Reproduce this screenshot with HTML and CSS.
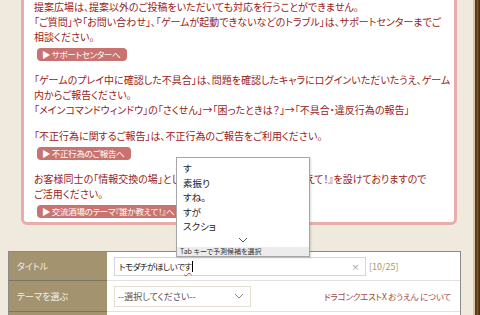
FILE: index.html
```html
<!DOCTYPE html>
<html lang="ja">
<head>
  <meta charset="UTF-8">
  <meta name="viewport" content="width=device-width, initial-scale=1.0">
  <title>提案広場 投稿</title>
  <link rel="stylesheet" href="styles.css">
</head>
<body>
  <div class="page">
    <div class="main">
      <!-- 注意書き -->
      <div class="notice">
        <div class="section">
          <p>提案広場は、提案以外のご投稿をいただいても対応を行うことができません。<br>
          「ご質問」や「お問い合わせ」、「ゲームが起動できないなどのトラブル」は、サポートセンターまでご<br>
          相談ください。</p>
          <a class="pill" href="#">▶ サポートセンターへ</a>
        </div>
        <div class="section">
          <p>「ゲームのプレイ中に確認した不具合」は、問題を確認したキャラにログインいただいたうえ、ゲーム<br>
          内からご報告ください。<br>
          「メインコマンドウィンドウ」の「さくせん」→「困ったときは？」→「不具合・違反行為の報告」</p>
        </div>
        <div class="section">
          <p>「不正行為に関するご報告」は、不正行為のご報告をご利用ください。</p>
          <a class="pill" href="#">▶ 不正行為のご報告へ</a>
        </div>
        <div class="section">
          <p>お客様同士の「情報交換の場」として、交流酒場のテーマ『誰か教えて！』を設けておりますので<br>
          ご活用ください。</p>
          <a class="pill" href="#">▶ 交流酒場のテーマ『誰か教えて！』へ</a>
        </div>
      </div>

      <!-- 投稿フォーム -->
      <div class="form">
        <div class="row">
          <div class="label">タイトル</div>
          <div class="field">
            <div class="input">
              <span class="typed">トモダチがほしいで<span class="squiggle">す</span><span class="caret"></span></span>
              <span class="clear">×</span>
            </div>
            <span class="count">[10/25]</span>
          </div>
        </div>
        <div class="row">
          <div class="label">テーマを選ぶ</div>
          <div class="field">
            <div class="select">
              <span>--選択してください--</span>
              <svg width="10" height="6" viewBox="0 0 10 6"><path d="M1 1l4 4 4-4" fill="none" stroke="#888" stroke-width="1"/></svg>
            </div>
            <a class="about" href="#">ドラゴンクエストX おうえん について</a>
          </div>
        </div>
        <div class="row">
          <div class="label"></div>
          <div class="field"></div>
        </div>
      </div>

      <!-- 予測変換ポップアップ -->
      <div class="ime">
        <ul>
          <li>す</li>
          <li>素振り</li>
          <li>すね。</li>
          <li>すが</li>
          <li>スクショ</li>
        </ul>
        <div class="more">
          <svg width="10" height="6" viewBox="0 0 10 6"><path d="M1 1l4 4 4-4" fill="none" stroke="#555" stroke-width="1"/></svg>
        </div>
        <div class="hint">Tab キーで予測候補を選択</div>
      </div>
    </div>
    <div class="frame"></div>
  </div>
</body>
</html>
```

FILE: styles.css
```css
body {
    margin: 0;
    background-color: #f0e9dd;
    font-family: "Noto Sans CJK JP", "Noto Sans", sans-serif;
    font-size: 10px;
    overflow: hidden;
  }

  .page {
    display: flex;
    height: 315px;
  }

  .main {
    position: relative;
    width: 473px;
    padding-left: 8px;
    box-sizing: border-box;
  }

  .frame {
    width: 5px;
    border-left: 2px solid #d9c9a4;
    background: linear-gradient(to right, #4a2c14, #7b5126 50%, #3b2410);
  }

  .notice {
    margin: -12px 0 0 13px;
    width: 420px;
    background-color: #fff;
    border: 3px solid #e8acaa;
    border-radius: 6px;
    padding: 8px 0 4px 10px;
    color: #981c20;
    font-feature-settings: "palt";
  }

  .section {
    margin-bottom: 11px;
  }

  .section:last-child {
    margin-bottom: 0;
  }

  .section p {
    margin: 0;
    line-height: 15px;
    white-space: nowrap;
  }

  .pill {
    display: block;
    width: fit-content;
    margin: 4px 0 0 3px;
    padding: 0 7px 0 5px;
    height: 13px;
    line-height: 13px;
    font-size: 8.5px;
    letter-spacing: -0.3px;
    color: #fff;
    background-color: #c97371;
    border-radius: 4px;
    text-decoration: none;
  }

  .form {
    margin-top: 26px;
    width: 451px;
    border: 1px solid #8a8a8a;
    border-bottom: none;
    background-color: #fff;
    font-feature-settings: "palt";
  }

  .row {
    display: flex;
    height: 28px;
    border-bottom: 1px solid #e2e2e2;
  }

  .row:nth-child(2) {
    height: 30px;
  }

  .label {
    width: 90px;
    padding-left: 8px;
    display: flex;
    align-items: center;
    background-color: #a3936f;
    color: #f6f1e6;
    font-size: 9px;
    border-bottom: 1px solid #7c7467;
    margin-bottom: -1px;
  }

  .field {
    flex: 1;
    display: flex;
    align-items: center;
    padding-left: 7px;
  }

  .input {
    display: flex;
    align-items: center;
    justify-content: space-between;
    box-sizing: border-box;
    width: 252px;
    height: 19px;
    padding: 0 6px 0 4px;
    border: 1px solid #d6d6d6;
    color: #222;
    font-size: 8.5px;
    letter-spacing: -0.5px;
  }

  .typed {
    display: flex;
    align-items: center;
  }

  .squiggle {
    text-decoration: underline wavy #e0302a;
    text-underline-offset: 2px;
  }

  .caret {
    width: 1px;
    height: 11px;
    margin-left: 1px;
    background-color: #000;
  }

  .clear {
    color: #888;
    font-size: 8px;
  }

  .count {
    margin-left: 3px;
    color: #ad9967;
    font-size: 9px;
  }

  .select {
    width: 137px;
    height: 21px;
    box-sizing: border-box;
    border: 1px solid #e4dfcf;
    display: flex;
    align-items: center;
    justify-content: space-between;
    padding: 0 6px 0 3px;
    color: #555;
    font-size: 9px;
  }

  .about {
    margin-left: auto;
    margin-right: 9px;
    color: #a54a45;
    font-size: 8.5px;
    letter-spacing: -0.2px;
    text-decoration: none;
  }

  .ime {
    position: absolute;
    left: 176px;
    top: 157px;
    width: 132px;
    height: 98px;
    background-color: #fff;
    border: 1px solid #a6a6a6;
    box-shadow: 1px 1px 2px rgba(0, 0, 0, 0.15);
    display: flex;
    flex-direction: column;
    color: #222;
    font-size: 9.5px;
    font-feature-settings: "palt";
  }

  .ime ul {
    list-style: none;
    margin: 3px 0 0 0;
    padding: 0 0 0 6px;
  }

  .ime li {
    height: 14.6px;
    line-height: 14.6px;
  }

  .more {
    flex: 1;
    display: flex;
    align-items: center;
    justify-content: center;
  }

  .hint {
    height: 9px;
    line-height: 9px;
    padding-left: 3px;
    font-size: 7px;
    color: #333;
    background-color: #ececec;
  }
```
